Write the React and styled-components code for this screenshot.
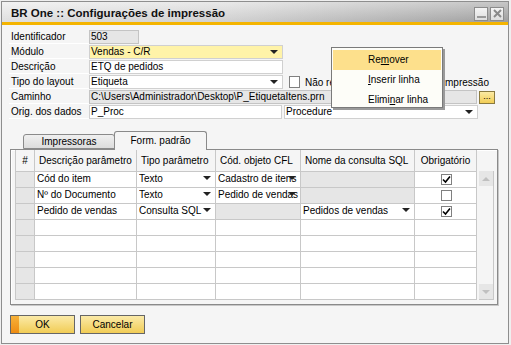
import styled, { createGlobalStyle } from 'styled-components'

const Global = createGlobalStyle`
    html, body { margin: 0; padding: 0; background: #efefef; }
    body { font-family: "Liberation Sans", Arial, sans-serif; font-size: 10px; color: #000; }
`

function Arrow() {
    return <Tri />
}

function Check({ on }) {
    return (
        <Box>
            {on && (
                <svg width="9" height="9" viewBox="0 0 9 9">
                    <path d="M1 4.5 L3.5 7 L8 1.5" stroke="#000" strokeWidth="1.6" fill="none" />
                </svg>
            )}
        </Box>
    )
}

const rows = [
    { desc: 'Cód do item', tipo: 'Texto', cfl: 'Cadastro de itens', sql: null, req: true },
    { desc: 'Nº do Documento', tipo: 'Texto', cfl: 'Pedido de vendas', sql: null, req: false },
    { desc: 'Pedido de vendas', tipo: 'Consulta SQL', cfl: null, sql: 'Pedidos de vendas', req: true },
]

function App() {
    return (
        <>
            <Global />
            <Window>
                <TitleBar>
                    <Title>BR One :: Configurações de impressão</Title>
                    <WinBtns>
                        <WinBtn>
                            <svg width="11" height="11" viewBox="0 0 11 11"><rect x="1" y="8" width="9" height="2" fill="#9a9a9a" /></svg>
                        </WinBtn>
                        <WinBtn>
                            <svg width="11" height="11" viewBox="0 0 11 11"><path d="M2 2 L9 9 M9 2 L2 9" stroke="#8a8a8a" strokeWidth="2" /></svg>
                        </WinBtn>
                    </WinBtns>
                </TitleBar>
                <Body>
                    <Form>
                        <Row>
                            <Label>Identificador</Label>
                            <Field w={50} gray>503</Field>
                        </Row>
                        <Row>
                            <Label>Módulo</Label>
                            <Field w={194} yellow>Vendas - C/R<Arrow /></Field>
                        </Row>
                        <Row>
                            <Label>Descrição</Label>
                            <Field w={194}>ETQ de pedidos</Field>
                        </Row>
                        <Row>
                            <Label>Tipo do layout</Label>
                            <Field w={194}>Etiqueta<Arrow /></Field>
                            <CheckLabel>
                                <Box big />
                                <span>Não reimprimir ao confirmar a&nbsp; impressão</span>
                            </CheckLabel>
                        </Row>
                        <Row>
                            <Label>Caminho</Label>
                            <Field w={388} gray>C:\Users\Administrador\Desktop\P_EtiquetaItens.prn</Field>
                            <Dots>...</Dots>
                        </Row>
                        <Row>
                            <Label>Orig. dos dados</Label>
                            <Field w={193}>P_Proc</Field>
                            <Field w={194} style={{ marginLeft: 2 }}>Procedure<Arrow /></Field>
                        </Row>
                    </Form>

                    <Tabs>
                        <Tab>Impressoras</Tab>
                        <Tab active>Form. padrão</Tab>
                    </Tabs>
                    <Panel>
                        <Grid>
                            <colgroup>
                                <col style={{ width: 19 }} />
                                <col style={{ width: 102 }} />
                                <col style={{ width: 79 }} />
                                <col style={{ width: 85 }} />
                                <col style={{ width: 114 }} />
                                <col style={{ width: 62 }} />
                            </colgroup>
                            <thead>
                                <tr>
                                    <Th center>#</Th>
                                    <Th>Descrição parâmetro</Th>
                                    <Th>Tipo parâmetro</Th>
                                    <Th>Cód. objeto CFL</Th>
                                    <Th>Nome da consulta SQL</Th>
                                    <Th center>Obrigatório</Th>
                                </tr>
                            </thead>
                            <tbody>
                                {rows.map((r, i) => (
                                    <tr key={i}>
                                        <Td gray />
                                        <Td>{r.desc}</Td>
                                        <Td><CellIn>{r.tipo}<Arrow /></CellIn></Td>
                                        <Td gray={!r.cfl}>{r.cfl && <CellIn>{r.cfl}<Arrow /></CellIn>}</Td>
                                        <Td gray={!r.sql}>{r.sql && <CellIn>{r.sql}<Arrow /></CellIn>}</Td>
                                        <Td center><Check on={r.req} /></Td>
                                    </tr>
                                ))}
                                {[0, 1, 2, 3, 4].map(i => (
                                    <tr key={'e' + i}>
                                        <Td gray /><Td /><Td /><Td /><Td /><Td />
                                    </tr>
                                ))}
                            </tbody>
                        </Grid>
                        <Scroll>
                            <ScrollBtn><UpTri /></ScrollBtn>
                            <ScrollBtn><DownTri /></ScrollBtn>
                        </Scroll>
                    </Panel>

                    <Buttons>
                        <Button primary>OK</Button>
                        <Button>Cancelar</Button>
                    </Buttons>
                </Body>

                <Menu>
                    <MenuItem active>Re<u>m</u>over</MenuItem>
                    <MenuItem><u>I</u>nserir linha</MenuItem>
                    <MenuItem>Elimi<u>n</u>ar linha</MenuItem>
                </Menu>
            </Window>
        </>
    )
}

const Window = styled.div`
    position: relative;
    margin: 1px 0 0 1px;
    width: 506px;
    height: 341px;
    border: 1px solid #8e8e8e;
    background: #f5f5f5;
    display: flex;
    flex-direction: column;
`
const TitleBar = styled.div`
    height: 20px;
    border-bottom: 3px solid #f4b400;
    background:
        linear-gradient(to bottom, rgba(255,255,255,0.35), rgba(0,0,0,0.06)),
        linear-gradient(to right, #ececec 0%, #dcdcdc 45%, #a8a8a8 100%);
    display: flex;
    align-items: center;
    justify-content: space-between;
    padding: 0 4px 0 9px;
`
const Title = styled.div`
    font-weight: bold;
    font-size: 11.5px;
    color: #111;
    padding-top: 1px;
`
const WinBtns = styled.div`
    display: flex;
    gap: 2px;
    padding-top: 3px;
`
const WinBtn = styled.div`
    width: 12px;
    height: 12px;
    border: 1px solid #8c8c8c;
    background: linear-gradient(#f4f4f4, #dedede);
    display: flex;
    align-items: center;
    justify-content: center;
`
const Body = styled.div`
    padding: 5px 0 0 7px;
    display: flex;
    flex-direction: column;
`
const Form = styled.div`
    display: flex;
    flex-direction: column;
    gap: 1px;
`
const Row = styled.div`
    display: flex;
    align-items: center;
    height: 14px;
`
const Label = styled.div`
    width: 80px;
    height: 14px;
    line-height: 13px;
    padding-left: 2px;
    box-sizing: border-box;
    border-bottom: 1px solid #fff;
    flex-shrink: 0;
`
const Field = styled.div`
    position: relative;
    width: ${p => p.w}px;
    height: 14px;
    line-height: 12px;
    box-sizing: border-box;
    border: 1px solid ${p => (p.gray ? '#c4c4c4' : '#d0d0d0')};
    background: ${p => (p.gray ? '#e6e6e6' : p.yellow ? '#fff3a8' : '#fff')};
    padding-left: 1px;
    white-space: nowrap;
    overflow: hidden;
    flex-shrink: 0;
`
const Tri = styled.span`
    position: absolute;
    right: 4px;
    top: 4px;
    width: 0;
    height: 0;
    border-left: 4px solid transparent;
    border-right: 4px solid transparent;
    border-top: 4px solid #222;
`
const CheckLabel = styled.div`
    display: flex;
    align-items: center;
    gap: 5px;
    margin-left: 6px;
    white-space: nowrap;
`
const Box = styled.span`
    display: inline-flex;
    align-items: center;
    justify-content: center;
    width: 11px;
    height: ${p => (p.big ? 12 : 11)}px;
    box-sizing: border-box;
    border: 1px solid #808080;
    background: #fff;
    vertical-align: middle;
`
const Dots = styled.div`
    width: 16px;
    height: 13px;
    margin-left: 2px;
    box-sizing: border-box;
    border: 1px solid #8a7a40;
    background: linear-gradient(#fbeaa4, #f2cd55);
    font-size: 9px;
    line-height: 8px;
    text-align: center;
`
const Tabs = styled.div`
    display: flex;
    align-items: flex-end;
    margin: 11px 0 0 14px;
    height: 19px;
`
const Tab = styled.div`
    height: ${p => (p.active ? 19 : 15)}px;
    width: ${p => (p.active ? 93 : 92)}px;
    box-sizing: border-box;
    border: 1px solid #8a8a8a;
    border-bottom: ${p => (p.active ? 'none' : '1px solid #8a8a8a')};
    border-radius: 3px 3px 0 0;
    background: ${p => (p.active ? '#f5f5f5' : 'linear-gradient(#f0f0f0, #dcdcdc)')};
    text-align: center;
    line-height: ${p => (p.active ? 17 : 13)}px;
    margin-left: ${p => (p.active ? -1 : 0)}px;
    position: relative;
    top: ${p => (p.active ? 1 : 0)}px;
    z-index: ${p => (p.active ? 1 : 0)};
`
const Panel = styled.div`
    width: 488px;
    height: 156px;
    box-sizing: border-box;
    margin-left: 1px;
    border: 1px solid #8a8a8a;
    box-shadow: inset 1px 1px 0 #fff, 1px 1px 0 #c8c8c8;
    display: flex;
    align-items: flex-start;
    padding-left: 4px;
`
const Grid = styled.table`
    border-collapse: collapse;
    table-layout: fixed;
    width: 462px;
    background: #fff;
    tr { height: 16px; }
    thead tr { height: 21px; }
`
const Th = styled.th`
    font-weight: normal;
    background: #f5f5f5;
    border: 1px solid #c8c8c8;
    border-top: none;
    text-align: ${p => (p.center ? 'center' : 'left')};
    padding: 0 4px;
    white-space: nowrap;
    overflow: hidden;
`
const Td = styled.td`
    border: 1px solid #c8c8c8;
    background: ${p => (p.gray ? '#e6e6e6' : '#fff')};
    padding: 0 0 0 2px;
    text-align: ${p => (p.center ? 'center' : 'left')};
    white-space: nowrap;
    overflow: hidden;
    line-height: 14px;
    height: 15px;
`
const CellIn = styled.div`
    position: relative;
    overflow: hidden;
    padding-right: 12px;
    height: 14px;
`
const Scroll = styled.div`
    width: 15px;
    margin: 21px 0 0 2px;
    height: 129px;
    display: flex;
    flex-direction: column;
    justify-content: space-between;
    border-right: 1px solid #c8c8c8;
    border-bottom: 1px solid #c8c8c8;
    box-sizing: border-box;
`
const ScrollBtn = styled.div`
    height: 15px;
    background: #e6e6e6;
    display: flex;
    align-items: center;
    justify-content: center;
`
const UpTri = styled.span`
    border-left: 4px solid transparent;
    border-right: 4px solid transparent;
    border-bottom: 4px solid #c0c0c0;
`
const DownTri = styled.span`
    border-left: 4px solid transparent;
    border-right: 4px solid transparent;
    border-top: 4px solid #c0c0c0;
`
const Buttons = styled.div`
    display: flex;
    gap: 5px;
    margin: 10px 0 0 1px;
`
const Button = styled.div`
    width: 65px;
    height: 19px;
    box-sizing: border-box;
    border: 1px solid #666;
    background: ${p =>
        p.primary
            ? 'linear-gradient(#f7b23a, #ee8c12) left / 8px 100% no-repeat, linear-gradient(#fbeaa8, #f1cc55)'
            : 'linear-gradient(#fbeaa8, #f1cc55)'};
    text-align: center;
    line-height: 17px;
`
const Menu = styled.div`
    position: absolute;
    left: 329px;
    top: 45px;
    width: 112px;
    height: 61px;
    box-sizing: border-box;
    border: 1px solid #7a7a7a;
    background: #fdfdf8;
    padding: 2px 1px 0;
    overflow: hidden;
    box-shadow: 2px 2px 0 #9a9a9a;
    z-index: 5;
`
const MenuItem = styled.div`
    height: 20px;
    line-height: 20px;
    flex-shrink: 0;
    padding-left: 35px;
    font-size: 10px;
    background: ${p => (p.active ? '#fde08c' : 'transparent')};
    u { text-decoration: underline; }
`

export default App
